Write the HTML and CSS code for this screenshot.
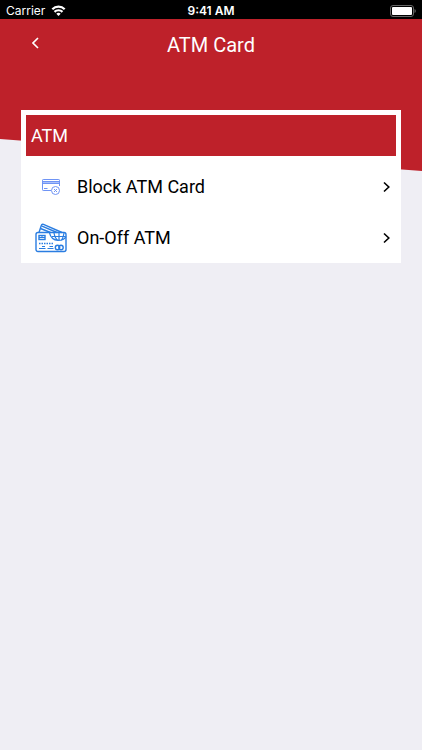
FILE: index.html
```html
<!DOCTYPE html>
<html lang="en">
<head>
    <meta charset="UTF-8">
    <meta name="viewport" content="width=device-width, initial-scale=1.0">
    <title>ATM Card</title>
    <link rel="stylesheet" href="styles.css">
</head>
<body>
    <div class="status-bar">
        <div class="carrier">
            <span>Carrier</span>
            <svg width="15" height="11" viewBox="0 0 14 11" fill="none" stroke="#fff" stroke-width="2.2">
                <path d="M0.8 4.2a8.8 8.8 0 0 1 12.4 0"/>
                <path d="M3 6.9a5.7 5.7 0 0 1 8 0"/>
                <path d="M7 10.9L4.8 8.7a3.2 3.2 0 0 1 4.4 0z" fill="#fff" stroke="none"/>
            </svg>
        </div>
        <span class="time">9:41 AM</span>
        <div class="battery">
            <svg width="26" height="12" viewBox="0 0 26 12">
                <rect x="0.5" y="0.5" width="23" height="11" rx="2.5" fill="none" stroke="#666"/>
                <rect x="2" y="2" width="20" height="8" rx="1" fill="#fff"/>
                <path d="M24.5 4v4q1.3-.6 1.3-2t-1.3-2z" fill="#666"/>
            </svg>
        </div>
    </div>
    <header class="hero">
        <div class="nav">
            <button class="back" aria-label="Back">
                <svg width="8" height="12" viewBox="0 0 8 12" fill="none" stroke="#fff" stroke-width="1.6">
                    <path d="M6 1L1 6l5 5"/>
                </svg>
            </button>
            <h1>ATM Card</h1>
        </div>
    </header>
    <main class="card">
        <h2>ATM</h2>
        <a class="row" href="#block">
            <span class="icon">
                <svg width="18" height="16" viewBox="0 0 18 16" fill="none" stroke="#6f94f5" stroke-width="1">
                    <path d="M0 3.500h18" stroke="#a9c0fa" stroke-width="2"/>
                    <path d="M9 11.500H1.200Q.5 11.500.5 10.800V1.200Q.5.5 1.200.5h15.600q.7 0 .7.7V7"/>
                    <path d="M.5 2.500h17M.5 4.500h17M2 9.500h3.500"/>
                    <circle cx="13.500" cy="11.500" r="4"/>
                    <path d="M12 10l3 3M15 10l-3 3"/>
                </svg>
            </span>
            <span class="label">Block ATM Card</span>
            <svg class="chevron" width="8" height="12" viewBox="0 0 8 12">
                <path d="M1 1.500L5.800 6 1 10.500"/>
            </svg>
        </a>
        <a class="row" href="#on-off">
            <span class="icon">
                <svg width="32" height="30" viewBox="0 0 32 30" fill="none" stroke="#2a7de1" stroke-width="1.400">
                    <path d="M4 9.500L6.300 2.500Q6.900.8 8.500 1.400L27 9.500M5.500 5.500l10 4M7 3.200l15 6.300"/>
                    <rect x="1" y="9.500" width="30" height="19" rx="2"/>
                    <rect x="4" y="12.500" width="6" height="4"/>
                    <path d="M4 14.500h6M7 12.500v2" stroke-width="1"/>
                    <path d="M14.500 10c1 4 4 7 8.500 7.500 4 0 7-2 8-4M17 13.500h13.500M19 10c.5 3 2 6 4 7.500M24 10v7.500M29 10c-.5 3-1.500 6-3 7.500" stroke-width="1.200"/>
                    <path d="M4 20.500h14" stroke-dasharray="1.500 1"/>
                    <path d="M4 25.500h6.500M12.500 25.500h6M7 23.500h3M14.500 23.500h3.500" stroke-width="1.200"/>
                    <circle cx="22.500" cy="24.500" r="2.200"/>
                    <circle cx="26" cy="24.500" r="2.200"/>
                </svg>
            </span>
            <span class="label">On-Off ATM</span>
            <svg class="chevron" width="8" height="12" viewBox="0 0 8 12">
                <path d="M1 1.500L5.800 6 1 10.500"/>
            </svg>
        </a>
    </main>
</body>
</html>
```
FILE: styles.css
```css
* {
    box-sizing: border-box;
}
body {
    margin: 0;
    background: #efeef4;
    font-family: Roboto, "Liberation Sans", sans-serif;
}
h1, h2 {
    margin: 0;
    font-weight: 400;
    color: #fff;
}
.status-bar {
    display: grid;
    grid-template-columns: 1fr auto 1fr;
    align-items: center;
    height: 19px;
    padding: 2px 6px 0;
    background: #000;
    color: #fff;
    font-family: Inter, sans-serif;
    font-size: 12px;
    line-height: 16px;
}
.carrier {
    display: flex;
    align-items: center;
    gap: 6px;
}
.time {
    font-weight: 600;
}
.battery {
    display: flex;
    justify-content: flex-end;
}
.hero {
    height: 152px;
    background: #be212a;
    clip-path: polygon(0 0, 100% 0, 100% 100%, 0 79%);
}
.nav {
    display: grid;
    grid-template-columns: 40px 1fr 40px;
    align-items: start;
    padding: 12px 16px 0;
}
.nav h1 {
    font-size: 20px;
    line-height: 28px;
    text-align: center;
}
.back {
    display: flex;
    align-items: center;
    justify-content: center;
    height: 24px;
    padding: 0;
    border: none;
    background: none;
    cursor: pointer;
}
.card {
    position: relative;
    margin: -61px 21px 0;
    padding: 5px 5px 0;
    background: #fff;
}
.card h2 {
    margin-bottom: 5px;
    padding: 0 5px;
    background: #be212a;
    font-size: 18px;
    line-height: 41px;
}
.row {
    display: flex;
    align-items: center;
    height: 51px;
    padding: 0 5px 0 9px;
    color: #000;
    text-decoration: none;
}
.icon {
    display: flex;
    justify-content: center;
    width: 32px;
    margin-right: 10px;
}
.label {
    flex: 1;
    font-size: 18px;
    line-height: 24px;
}
.chevron {
    fill: none;
    stroke: #000;
    stroke-width: 1.6;
}
```
